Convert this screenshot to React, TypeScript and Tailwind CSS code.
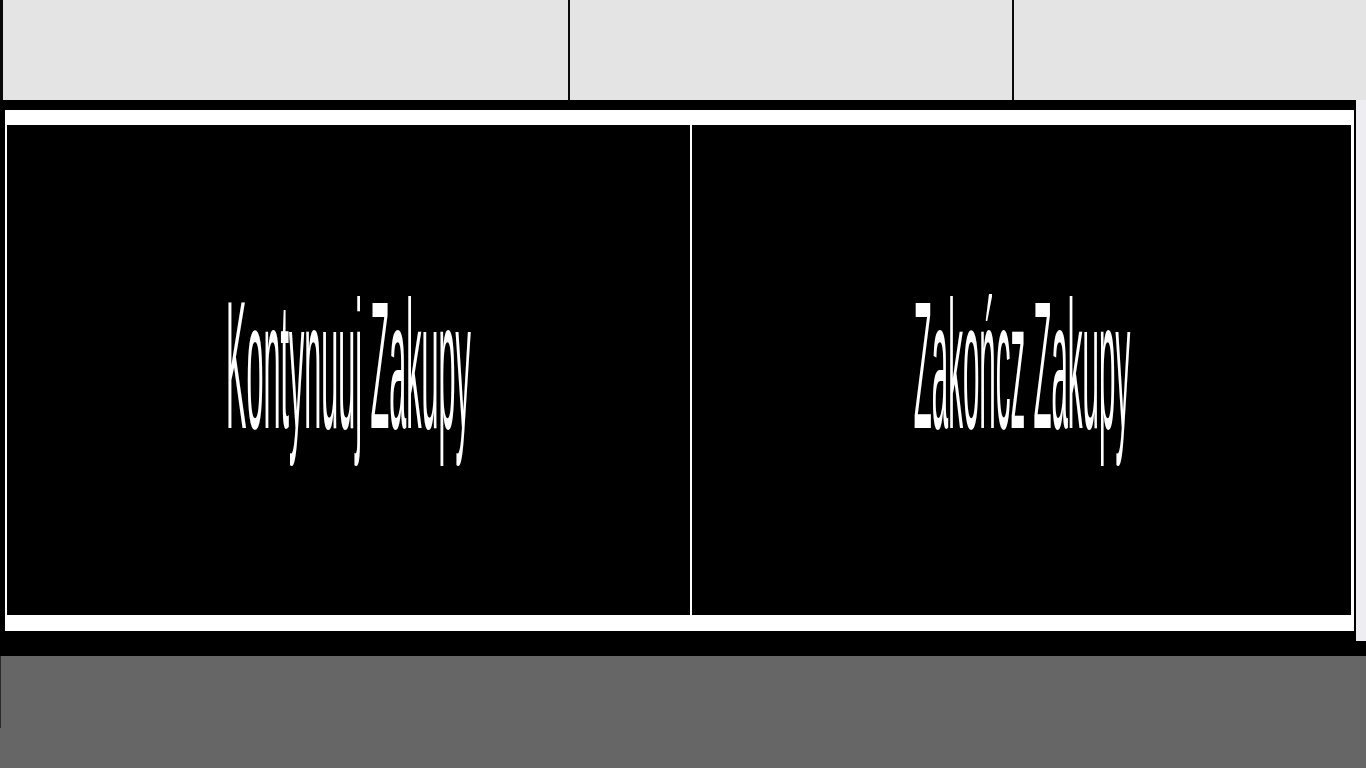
export default function App() {
  return (
    <div className="w-[1366px] h-[768px] flex flex-col bg-black overflow-hidden font-['Liberation_Sans',Arial,sans-serif]">
      {/* top strip */}
      <div className="flex h-[100px] shrink-0 bg-[#0a0a0a] pl-[3px] gap-[2px]">
        <div className="w-[565px] bg-[#e4e4e4]" />
        <div className="w-[442px] bg-[#e4e4e4]" />
        <div className="flex-1 bg-[#e4e4e4]" />
      </div>

      {/* main area */}
      <div className="flex h-[556px] shrink-0 items-start pl-[5px]">
        <div className="mt-[10px] flex h-[521px] w-[1349px] gap-[2px] bg-white pt-[15px] pb-[16px] pl-[2px] pr-[3px]">
          <button className="flex w-[683px] items-center justify-center overflow-hidden bg-black">
            <span className="mb-[10px] shrink-0 whitespace-nowrap text-[181px] leading-[normal] text-white scale-x-[0.169]">
              Kontynuuj Zakupy
            </span>
          </button>
          <button className="flex w-[659px] items-center justify-center overflow-hidden bg-black">
            <span className="mb-[10px] shrink-0 whitespace-nowrap text-[181px] leading-[normal] text-white scale-x-[0.163]">
              Zakończ Zakupy
            </span>
          </button>
        </div>
        <div className="ml-[2px] h-[541px] w-[10px] bg-[#eeeef2]" />
      </div>

      {/* bottom */}
      <div className="flex flex-1 bg-[#666666]">
        <div className="h-[72px] w-px bg-[#2a2a2a]" />
      </div>
    </div>
  );
}
